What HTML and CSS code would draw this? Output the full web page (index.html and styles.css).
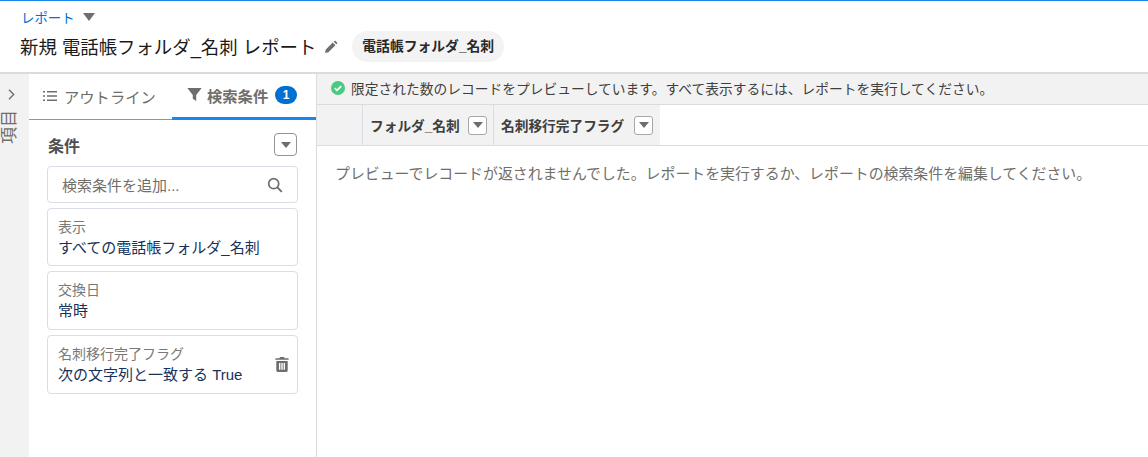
FILE: index.html
```html
<!DOCTYPE html>
<html lang="ja">
<head>
    <meta charset="UTF-8">
    <title>新規 電話帳フォルダ_名刺 レポート</title>
    <link rel="stylesheet" href="styles.css">
</head>
<body>
    <header class="page-header">
        <div class="crumb">
            <a class="crumb-link">レポート</a>
            <span class="caret"></span>
        </div>
        <div class="title-row">
            <h1>新規 電話帳フォルダ_名刺 レポート</h1>
            <svg class="pencil" viewBox="0 0 14 14" width="14" height="14">
                <path d="M1 13l.8-3.4 7-7 2.6 2.6-7 7zM9.7 1.7l.9-.8c.3-.3.7-.3 1 0l1.5 1.5c.3.3.3.7 0 1l-.8.9z" fill="#706e6b"/>
            </svg>
            <span class="pill">電話帳フォルダ_名刺</span>
        </div>
    </header>

    <div class="workspace">
        <aside class="rail">
            <svg class="rail-arrow" viewBox="0 0 7 11" width="7" height="11">
                <path d="M1 .8l4.7 4.7L1 10.2" fill="none" stroke="#706e6b" stroke-width="1.4"/>
            </svg>
            <span class="rail-label">項目</span>
        </aside>

        <section class="panel">
            <div class="tabs">
                <div class="tab">
                    <svg viewBox="0 0 14 12" width="14" height="12">
                        <path d="M0 1h2v1.4H0zM4 1h10v1.4H4zM0 5.3h2v1.4H0zM4 5.3h10v1.4H4zM0 9.6h2V11H0zM4 9.6h10V11H4z" fill="#706e6b"/>
                    </svg>
                    アウトライン
                </div>
                <div class="tab tab-active">
                    <svg viewBox="0 0 14 14" width="15" height="15">
                        <path d="M.3 1h13.4L8.6 7.4V13L5.4 11V7.4z" fill="#706e6b"/>
                    </svg>
                    検索条件
                    <span class="badge">1</span>
                </div>
            </div>

            <div class="filters">
                <div class="filters-head">
                    <h2>条件</h2>
                    <button class="menu-btn menu-btn-lg"><span class="caret caret-sm"></span></button>
                </div>
                <div class="search">
                    <span>検索条件を追加...</span>
                    <svg viewBox="0 0 16 16" width="16" height="16">
                        <circle cx="6.7" cy="6.7" r="5" fill="none" stroke="#706e6b" stroke-width="1.7"/>
                        <path d="M10.4 10.4l4.4 4.4" stroke="#706e6b" stroke-width="1.9"/>
                    </svg>
                </div>
                <div class="filter-card card-display">
                    <div class="filter-label">表示</div>
                    <div class="filter-value">すべての電話帳フォルダ_名刺</div>
                </div>
                <div class="filter-card">
                    <div class="filter-label">交換日</div>
                    <div class="filter-value">常時</div>
                </div>
                <div class="filter-card card-custom">
                    <div>
                        <div class="filter-label">名刺移行完了フラグ</div>
                        <div class="filter-value">次の文字列と一致する True</div>
                    </div>
                    <svg class="trash" viewBox="0 0 14 15" width="14" height="15">
                        <path d="M5 0h4l.6 1.3H13c.4 0 .7.3.7.7v.8H.3V2c0-.4.3-.7.7-.7h3.4zM1.3 4h11.4v9.6c0 .8-.6 1.4-1.4 1.4H2.7c-.8 0-1.4-.6-1.4-1.4zM4 6v6.8h1.4V6zM6.3 6v6.8h1.4V6zM8.6 6v6.8H10V6z" fill="#706e6b" fill-rule="evenodd"/>
                    </svg>
                </div>
            </div>
        </section>

        <main class="preview">
            <div class="notice">
                <svg viewBox="0 0 14 14" width="14" height="14">
                    <circle cx="7" cy="7" r="7" fill="#4bca81"/>
                    <path d="M3.8 7.2l2.2 2.2 4.2-4.2" fill="none" stroke="#fff" stroke-width="1.7"/>
                </svg>
                限定された数のレコードをプレビューしています。すべて表示するには、レポートを実行してください。
            </div>
            <div class="table-head">
                <div class="col col-blank"></div>
                <div class="col col-name">
                    フォルダ_名刺
                    <button class="menu-btn"><span class="caret caret-sm"></span></button>
                </div>
                <div class="col col-flag">
                    名刺移行完了フラグ
                    <button class="menu-btn"><span class="caret caret-sm"></span></button>
                </div>
            </div>
            <p class="empty">プレビューでレコードが返されませんでした。レポートを実行するか、レポートの検索条件を編集してください。</p>
        </main>
    </div>
</body>
</html>
```

FILE: styles.css
```css
* {
    box-sizing: border-box;
}
body {
    margin: 0;
    height: 457px;
    overflow: hidden;
    display: flex;
    flex-direction: column;
    font-family: "Liberation Sans", "Noto Sans CJK JP", sans-serif;
    font-size: 15px;
    color: #3e3e3c;
    background: white;
}
.page-header {
    height: 74px;
    padding: 8px 0 0 20px;
    border-top: 1px solid #1589ee;
    border-bottom: 2px solid #dddbda;
}
.crumb {
    display: flex;
    align-items: center;
    gap: 8px;
    height: 16px;
    padding-left: 1px;
}
.crumb-link {
    font-size: 13.4px;
    color: #0070d2;
}
.caret {
    width: 0;
    height: 0;
    border-left: 6px solid transparent;
    border-right: 6px solid transparent;
    border-top: 8px solid #706e6b;
}
.caret-sm {
    display: block;
    border-left-width: 5px;
    border-right-width: 5px;
    border-top-width: 6px;
}
.title-row {
    display: flex;
    align-items: center;
    margin-top: 6px;
    height: 31px;
}
h1 {
    margin: 0 0 2px;
    font-size: 18.4px;
    font-weight: normal;
    color: #1a1a1a;
}
.pencil {
    margin-left: 8px;
}
.pill {
    margin-left: 14px;
    padding: 0 10px;
    height: 31px;
    line-height: 31px;
    border-radius: 16px;
    background: #f3f3f3;
    font-size: 13.8px;
    font-weight: bold;
    color: #2b2826;
}
.workspace {
    flex: 1;
    display: flex;
    min-height: 0;
}
.rail {
    width: 29px;
    flex: none;
    background: #f3f2f2;
    display: flex;
    flex-direction: column;
    align-items: center;
    padding-top: 15px;
}
.rail-arrow {
    margin-left: -7px;
}
.rail-label {
    writing-mode: vertical-rl;
    text-orientation: sideways;
    transform: rotate(180deg);
    margin-left: -10px;
    margin-top: 10px;
    font-size: 17px;
    line-height: 20px;
    color: #706e6b;
}
.panel {
    width: 288px;
    flex: none;
    border-right: 1px solid #dddbda;
}
.tabs {
    display: flex;
    height: 46px;
    border-bottom: 1px solid #969492;
}
.tab {
    display: flex;
    align-items: center;
    gap: 7px;
    width: 143px;
    padding: 0 0 2px 14px;
    font-size: 15.3px;
    color: #706e6b;
    white-space: nowrap;
}
.tab-active {
    width: 144px;
    gap: 5px;
    font-weight: bold;
    padding-left: 15px;
    height: 46px;
    border-bottom: 3px solid #1589ee;
}
.badge {
    margin-left: 2px;
    width: 22px;
    height: 18px;
    border-radius: 9px;
    background: #0070d2;
    color: white;
    font-size: 12px;
    line-height: 18px;
    text-align: center;
}
.filters {
    padding: 0 18px;
}
.filters-head {
    display: flex;
    justify-content: space-between;
    align-items: center;
    height: 46px;
    padding: 3px 1px 0 0;
}
h2 {
    margin: 0 0 0 1px;
    font-size: 16px;
    color: #514f4d;
}
.menu-btn {
    display: flex;
    align-items: center;
    justify-content: center;
    width: 19px;
    height: 19px;
    padding: 0;
    background: white;
    border: 1px solid #a8a7a5;
    border-radius: 3px;
}
.menu-btn-lg {
    width: 23px;
    height: 23px;
    border-color: #969492;
    border-radius: 4px;
}
.search {
    display: flex;
    justify-content: space-between;
    align-items: center;
    height: 37px;
    padding: 0 14px;
    border: 1px solid #d8dde6;
    border-radius: 4px;
    color: #706e6b;
}
.filter-card {
    height: 59px;
    margin-top: 5px;
    padding: 9px 10px 0;
    border: 1px solid #d8dde6;
    border-radius: 4px;
}
.card-display {
    height: 58px;
}
.card-custom {
    display: flex;
    justify-content: space-between;
    align-items: flex-start;
}
.filter-label {
    font-size: 14px;
    line-height: 18px;
    color: #7a7876;
}
.filter-value {
    margin-top: 2px;
    line-height: 20px;
    color: #16325c;
}
.trash {
    margin-top: 12px;
    margin-right: -2px;
}
.preview {
    flex: 1;
    min-width: 0;
}
.notice {
    display: flex;
    align-items: center;
    gap: 6px;
    height: 31px;
    padding: 0 0 3px 14px;
    background: #f3f2f2;
    border-bottom: 1px solid #dddbda;
    font-size: 13.75px;
    color: #3e3e3c;
}
.table-head {
    display: flex;
    height: 41px;
    border-bottom: 1px solid #d8dde6;
}
.col {
    display: flex;
    align-items: center;
    justify-content: space-between;
    background: #f3f2f2;
    font-size: 13.7px;
    font-weight: bold;
    color: #3e3e3c;
    border-right: 1px solid #d8dde6;
}
.col-blank {
    width: 46px;
}
.col-name {
    width: 131px;
    padding: 0 6px 0 7px;
}
.col-flag {
    width: 166px;
    padding: 0 7px 0 7px;
    border-right: none;
}
.empty {
    margin: 18px 0 0 18px;
    line-height: 20px;
    font-size: 14.9px;
    color: #706e6b;
}
```
